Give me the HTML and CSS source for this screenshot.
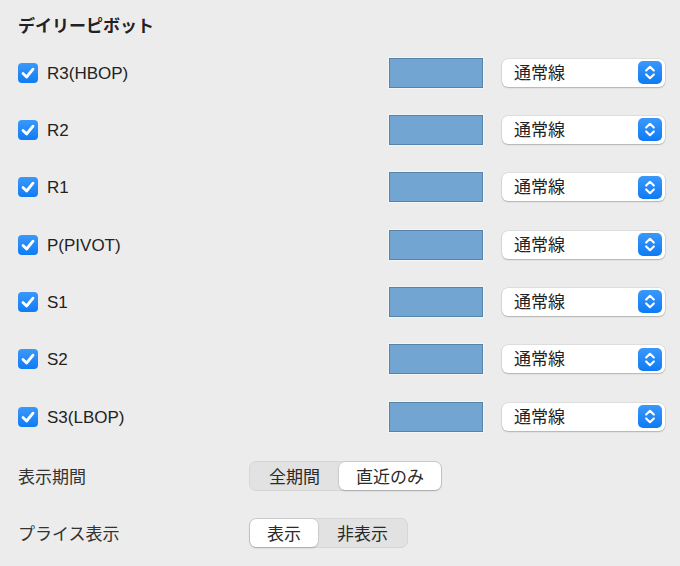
FILE: index.html
```html
<!DOCTYPE html>
<html lang="ja">
<head>
    <meta charset="UTF-8">
    <title>デイリーピボット</title>
    <link rel="stylesheet" href="styles.css">
</head>
<body>
    <div class="panel">
        <h2 class="section-title">デイリーピボット</h2>

        <div class="pivot-list">
            <div class="pivot-row">
                <span class="check"><svg viewBox="0 0 20 20"><path d="M5 10.5 L8.6 14 L15 6.2"/></svg></span>
                <span class="pivot-label">R3(HBOP)</span>
                <span class="swatch"></span>
                <div class="select"><span class="select-text">通常線</span><span class="stepper"><svg viewBox="0 0 24 24"><path d="M8 10 L12 6 L16 10 M8 14 L12 18 L16 14"/></svg></span></div>
            </div>
            <div class="pivot-row">
                <span class="check"><svg viewBox="0 0 20 20"><path d="M5 10.5 L8.6 14 L15 6.2"/></svg></span>
                <span class="pivot-label">R2</span>
                <span class="swatch"></span>
                <div class="select"><span class="select-text">通常線</span><span class="stepper"><svg viewBox="0 0 24 24"><path d="M8 10 L12 6 L16 10 M8 14 L12 18 L16 14"/></svg></span></div>
            </div>
            <div class="pivot-row">
                <span class="check"><svg viewBox="0 0 20 20"><path d="M5 10.5 L8.6 14 L15 6.2"/></svg></span>
                <span class="pivot-label">R1</span>
                <span class="swatch"></span>
                <div class="select"><span class="select-text">通常線</span><span class="stepper"><svg viewBox="0 0 24 24"><path d="M8 10 L12 6 L16 10 M8 14 L12 18 L16 14"/></svg></span></div>
            </div>
            <div class="pivot-row">
                <span class="check"><svg viewBox="0 0 20 20"><path d="M5 10.5 L8.6 14 L15 6.2"/></svg></span>
                <span class="pivot-label">P(PIVOT)</span>
                <span class="swatch"></span>
                <div class="select"><span class="select-text">通常線</span><span class="stepper"><svg viewBox="0 0 24 24"><path d="M8 10 L12 6 L16 10 M8 14 L12 18 L16 14"/></svg></span></div>
            </div>
            <div class="pivot-row">
                <span class="check"><svg viewBox="0 0 20 20"><path d="M5 10.5 L8.6 14 L15 6.2"/></svg></span>
                <span class="pivot-label">S1</span>
                <span class="swatch"></span>
                <div class="select"><span class="select-text">通常線</span><span class="stepper"><svg viewBox="0 0 24 24"><path d="M8 10 L12 6 L16 10 M8 14 L12 18 L16 14"/></svg></span></div>
            </div>
            <div class="pivot-row">
                <span class="check"><svg viewBox="0 0 20 20"><path d="M5 10.5 L8.6 14 L15 6.2"/></svg></span>
                <span class="pivot-label">S2</span>
                <span class="swatch"></span>
                <div class="select"><span class="select-text">通常線</span><span class="stepper"><svg viewBox="0 0 24 24"><path d="M8 10 L12 6 L16 10 M8 14 L12 18 L16 14"/></svg></span></div>
            </div>
            <div class="pivot-row">
                <span class="check"><svg viewBox="0 0 20 20"><path d="M5 10.5 L8.6 14 L15 6.2"/></svg></span>
                <span class="pivot-label">S3(LBOP)</span>
                <span class="swatch"></span>
                <div class="select"><span class="select-text">通常線</span><span class="stepper"><svg viewBox="0 0 24 24"><path d="M8 10 L12 6 L16 10 M8 14 L12 18 L16 14"/></svg></span></div>
            </div>
        </div>

        <div class="option-row first">
            <span class="option-label">表示期間</span>
            <div class="segmented">
                <span class="seg seg-all">全期間</span>
                <span class="seg seg-recent active">直近のみ</span>
            </div>
        </div>
        <div class="option-row">
            <span class="option-label">プライス表示</span>
            <div class="segmented">
                <span class="seg seg-show active">表示</span>
                <span class="seg seg-hide">非表示</span>
            </div>
        </div>
    </div>
</body>
</html>
```

FILE: styles.css
```css
body {
    margin: 0;
    background-color: #ececec;
    color: #222;
    font-family: "Liberation Sans", "Noto Sans CJK JP", sans-serif;
    font-size: 17px;
}
.panel {
    padding: 0 15px 0 18px;
}
.section-title {
    margin: 0;
    padding-top: 15px;
    height: 29px;
    line-height: 24px;
    font-size: 17px;
    font-weight: bold;
    color: #222;
}
.pivot-row {
    display: flex;
    align-items: center;
    height: 57.33px;
}
.check {
    width: 20px;
    height: 20px;
    border-radius: 4px;
    background: linear-gradient(#3b98fb, #0f7cf4);
    display: flex;
    flex-shrink: 0;
}
.check svg {
    width: 20px;
    height: 20px;
    fill: none;
    stroke: #fff;
    stroke-width: 2.8;
    stroke-linecap: round;
    stroke-linejoin: round;
}
.pivot-label {
    margin-left: 9px;
    flex: 1;
    padding-top: 2px;
}
.swatch {
    width: 92px;
    height: 28px;
    background-color: #72a5d1;
    border: 1px solid #5683aa;
    box-shadow: 0 0 0 1px #f4f4f4;
    margin-right: 19px;
}
.select {
    width: 163px;
    height: 28px;
    box-sizing: border-box;
    background: #fff;
    border-radius: 6px;
    box-shadow: 0 0 0 0.5px rgba(0,0,0,0.12), 0 1px 1.5px rgba(0,0,0,0.2);
    display: flex;
    align-items: center;
    justify-content: space-between;
    padding: 0 3px 0 12px;
}
.select-text {
    margin-bottom: 3px;
}
.stepper {
    width: 24px;
    height: 23px;
    border-radius: 5px;
    background: linear-gradient(#3a98fb, #0e7bf4);
    display: flex;
}
.stepper svg {
    width: 24px;
    height: 23px;
    fill: none;
    stroke: #fff;
    stroke-width: 2.2;
    stroke-linecap: round;
    stroke-linejoin: round;
}
.option-row {
    display: flex;
    align-items: center;
    height: 57px;
}
.option-row.first {
    margin-top: 2px;
}
.option-label {
    width: 231px;
    color: #333;
}
.segmented {
    display: flex;
    height: 30px;
    box-sizing: border-box;
    background: #e2e2e2;
    border: 1px solid #d6d6d6;
    border-radius: 7px;
}
.seg {
    display: flex;
    align-items: center;
    justify-content: center;
    border-radius: 6px;
    color: #2a2a2a;
}
.seg.active {
    background: #fff;
    box-shadow: 0 0 0 0.5px rgba(0,0,0,0.1), 0 1px 2px rgba(0,0,0,0.18);
}
.seg-all { width: 89px; }
.seg-recent { width: 102px; }
.seg-show { width: 68px; }
.seg-hide { width: 89px; }
```
